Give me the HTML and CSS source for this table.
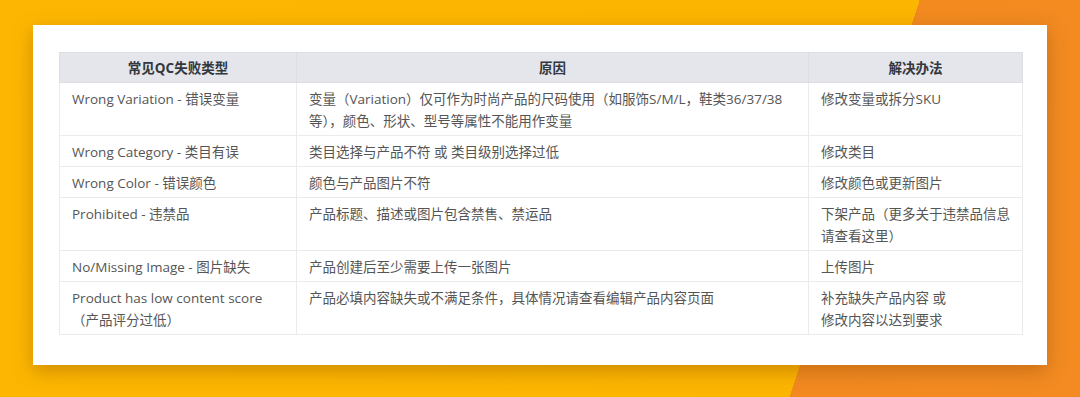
FILE: index.html
```html
<!DOCTYPE html>
<html lang="zh-CN">
<head>
<meta charset="utf-8">
<title>QC失败类型</title>
<link rel="stylesheet" href="styles.css">
</head>
<body>
<div class="card">
  <table class="qc-table">
    <colgroup>
      <col class="c1"><col class="c2"><col class="c3">
    </colgroup>
    <thead>
      <tr><th>常见QC失败类型</th><th>原因</th><th>解决办法</th></tr>
    </thead>
    <tbody>
      <tr>
        <td>Wrong Variation - 错误变量</td>
        <td>变量（Variation）仅可作为时尚产品的尺码使用（如服饰S/M/L，鞋类36/37/38<br>等），颜色、形状、型号等属性不能用作变量</td>
        <td>修改变量或拆分SKU</td>
      </tr>
      <tr>
        <td>Wrong Category - 类目有误</td>
        <td>类目选择与产品不符 或 类目级别选择过低</td>
        <td>修改类目</td>
      </tr>
      <tr>
        <td>Wrong Color - 错误颜色</td>
        <td>颜色与产品图片不符</td>
        <td>修改颜色或更新图片</td>
      </tr>
      <tr>
        <td>Prohibited - 违禁品</td>
        <td>产品标题、描述或图片包含禁售、禁运品</td>
        <td>下架产品（更多关于违禁品信息<br>请查看这里）</td>
      </tr>
      <tr>
        <td>No/Missing Image - 图片缺失</td>
        <td>产品创建后至少需要上传一张图片</td>
        <td>上传图片</td>
      </tr>
      <tr>
        <td>Product has low content score<br>（产品评分过低）</td>
        <td>产品必填内容缺失或不满足条件，具体情况请查看编辑产品内容页面</td>
        <td>补充缺失产品内容 或<br>修改内容以达到要求</td>
      </tr>
    </tbody>
  </table>
</div>
</body>
</html>
```

FILE: styles.css
```css
html, body {
  margin: 0;
  height: 100%;
}
body {
  box-sizing: border-box;
  width: 1080px;
  height: 397px;
  padding: 25px 33px 0 33px;
  background: linear-gradient(108.13deg, #fdb702 0, #fcb500 874px, #f28a20 874px, #f38b22 100%);
  font-family: "Segoe UI", "Open Sans", "Noto Sans CJK SC", sans-serif;
  overflow: hidden;
}
.card {
  background: #ffffff;
  height: 340px;
  box-sizing: border-box;
  padding: 27px 25px 0 26px;
  box-shadow: 0 6px 18px rgba(120, 60, 0, 0.35);
}
.qc-table {
  width: 963px;
  border-collapse: collapse;
  table-layout: fixed;
  font-size: 13.5px;
  color: #555555;
}
.c1 { width: 237px; }
.c2 { width: 512px; }
.c3 { width: 214px; }
.qc-table th {
  background: #e4e6eb;
  color: #333840;
  font-weight: bold;
  height: 30px;
  padding: 0 12px;
  box-sizing: border-box;
  border: 1px solid #dcdee3;
  text-align: center;
  line-height: 22px;
}
.qc-table td {
  border: 1px solid #ebebeb;
  padding: 5px 12px 3px 12px;
  line-height: 22px;
  vertical-align: top;
  text-align: left;
}
```
